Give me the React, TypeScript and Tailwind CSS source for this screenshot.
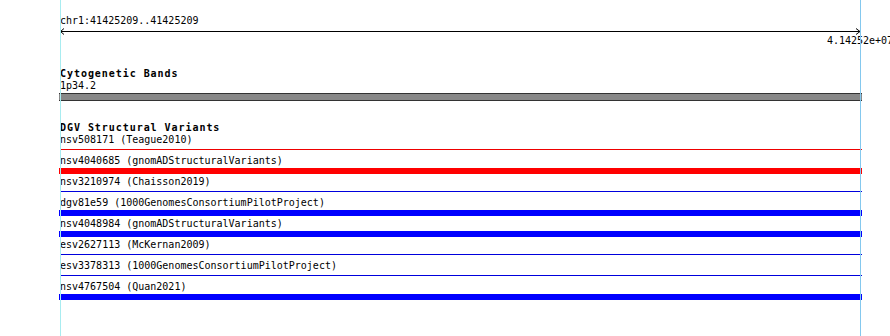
const rows = [
  { label: 'nsv508171 (Teague2010)', color: 'red', thick: false },
  { label: 'nsv4040685 (gnomADStructuralVariants)', color: 'red', thick: true },
  { label: 'nsv3210974 (Chaisson2019)', color: 'blue', thick: false },
  { label: 'dgv81e59 (1000GenomesConsortiumPilotProject)', color: 'blue', thick: true },
  { label: 'nsv4048984 (gnomADStructuralVariants)', color: 'blue', thick: true },
  { label: 'esv2627113 (McKernan2009)', color: 'blue', thick: false },
  { label: 'esv3378313 (1000GenomesConsortiumPilotProject)', color: 'blue', thick: false },
  { label: 'nsv4767504 (Quan2021)', color: 'blue', thick: true },
];

function Feature({ color, thick }: { color: string; thick: boolean }) {
  if (thick) {
    return (
      <div className="h-[9px] pt-px">
        <div
          className={`-ml-px h-[6px] w-[803px] ${color === 'red' ? 'bg-[#ff0000]' : 'bg-[#0000ff]'}`}
        />
      </div>
    );
  }
  return (
    <div className="h-[9px] pt-[3px]">
      <div
        className={`h-px w-[802px] ${color === 'red' ? 'bg-[#ee0000]' : 'bg-[#0000dd]'}`}
      />
    </div>
  );
}

export default function App() {
  return (
    <div
      className="relative h-[336px] w-[890px] overflow-hidden bg-white text-[10px] leading-[12px] text-black"
      style={{ fontFamily: '"DejaVu Sans Mono", "Liberation Mono", monospace' }}
    >
      <div className="ml-[60px] w-[802px] pt-[15px]">
        {/* Ruler */}
        <div>chr1:41425209..41425209</div>
        <div className="mt-px h-[7px]">
          <svg width="802" height="7" className="block">
            <line x1="0" y1="3.5" x2="801" y2="3.5" stroke="#000" strokeWidth="1" />
            <polyline points="4,0.5 0.5,3.5 4,6.5" fill="none" stroke="#000" strokeWidth="1" />
            <polyline points="796,0.5 800,3.5 796,6.5" fill="none" stroke="#000" strokeWidth="1" />
          </svg>
        </div>
        <div className="relative h-[12px]">
          <span className="absolute left-[800px] -translate-x-1/2 whitespace-nowrap">4.14252e+07</span>
        </div>

        {/* Cytogenetic Bands */}
        <div className="mt-[21px] font-bold tracking-[0.95px]">Cytogenetic Bands</div>
        <div>1p34.2</div>
        <div className="mt-px -ml-px h-[8px] w-[803px] border-y border-[#333] bg-[#888888]" />

        {/* DGV Structural Variants */}
        <div className="mt-[21px] font-bold tracking-[0.95px]">DGV Structural Variants</div>
        {rows.map((row, i) => (
          <div key={i}>
            <div className="whitespace-nowrap">{row.label}</div>
            <Feature color={row.color} thick={row.thick} />
          </div>
        ))}
      </div>

      {/* guide lines */}
      <div className="absolute left-[60px] top-0 h-full w-px bg-[#a8ecf0]" />
      <div className="absolute left-[860px] top-0 h-full w-px bg-[#84c8ee]" />
    </div>
  );
}
